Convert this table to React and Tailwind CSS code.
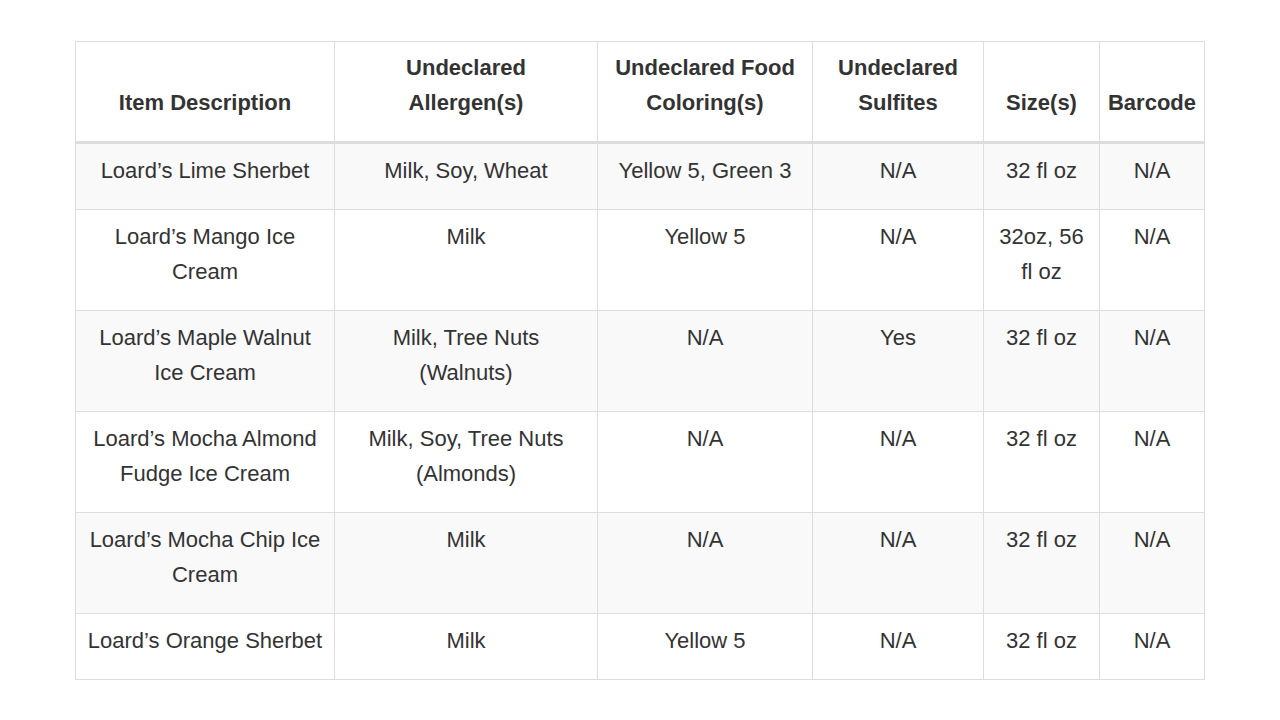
import React from "react";

const HEADERS = [
  "Item Description",
  "Undeclared Allergen(s)",
  "Undeclared Food Coloring(s)",
  "Undeclared Sulfites",
  "Size(s)",
  "Barcode",
];

const WIDTHS = ["w-[259px]", "w-[263px]", "w-[215px]", "w-[171px]", "w-[116px]", "w-[105px]"];

const ROWS = [
  ["Loard’s Lime Sherbet", "Milk, Soy, Wheat", "Yellow 5, Green 3", "N/A", "32 fl oz", "N/A"],
  ["Loard’s Mango Ice Cream", "Milk", "Yellow 5", "N/A", "32oz, 56 fl oz", "N/A"],
  ["Loard’s Maple Walnut Ice Cream", "Milk, Tree Nuts (Walnuts)", "N/A", "Yes", "32 fl oz", "N/A"],
  ["Loard’s Mocha Almond Fudge Ice Cream", "Milk, Soy, Tree Nuts (Almonds)", "N/A", "N/A", "32 fl oz", "N/A"],
  ["Loard’s Mocha Chip Ice Cream", "Milk", "N/A", "N/A", "32 fl oz", "N/A"],
  ["Loard’s Orange Sherbet", "Milk", "Yellow 5", "N/A", "32 fl oz", "N/A"],
];

export default function App() {
  return (
    <div className="min-h-[720px] bg-white pl-[75px] pt-[41px] font-['Liberation_Sans',Arial,sans-serif] text-[#333]">
      <table className="w-[1129px] table-fixed border-collapse text-[22px] leading-[35px]">
        <colgroup>
          {WIDTHS.map((w, i) => (
            <col key={i} className={w} />
          ))}
        </colgroup>
        <thead>
          <tr>
            {HEADERS.map((h, i) => (
              <th
                key={h}
                className={`border border-b-[3px] border-[#ddd] pb-[21px] pt-[8px] text-center align-bottom font-bold ${
                  i === HEADERS.length - 1 ? "px-[4px]" : "px-[12px]"
                }`}
              >
                {h}
              </th>
            ))}
          </tr>
        </thead>
        <tbody>
          {ROWS.map((row, r) => (
            <tr key={r} className={r % 2 === 0 ? "bg-[#f9f9f9]" : "bg-white"}>
              {row.map((cell, c) => (
                <td
                  key={c}
                  className="border border-[#ddd] px-[11px] pb-[21px] pt-[9px] text-center align-top"
                >
                  {cell}
                </td>
              ))}
            </tr>
          ))}
        </tbody>
      </table>
    </div>
  );
}
